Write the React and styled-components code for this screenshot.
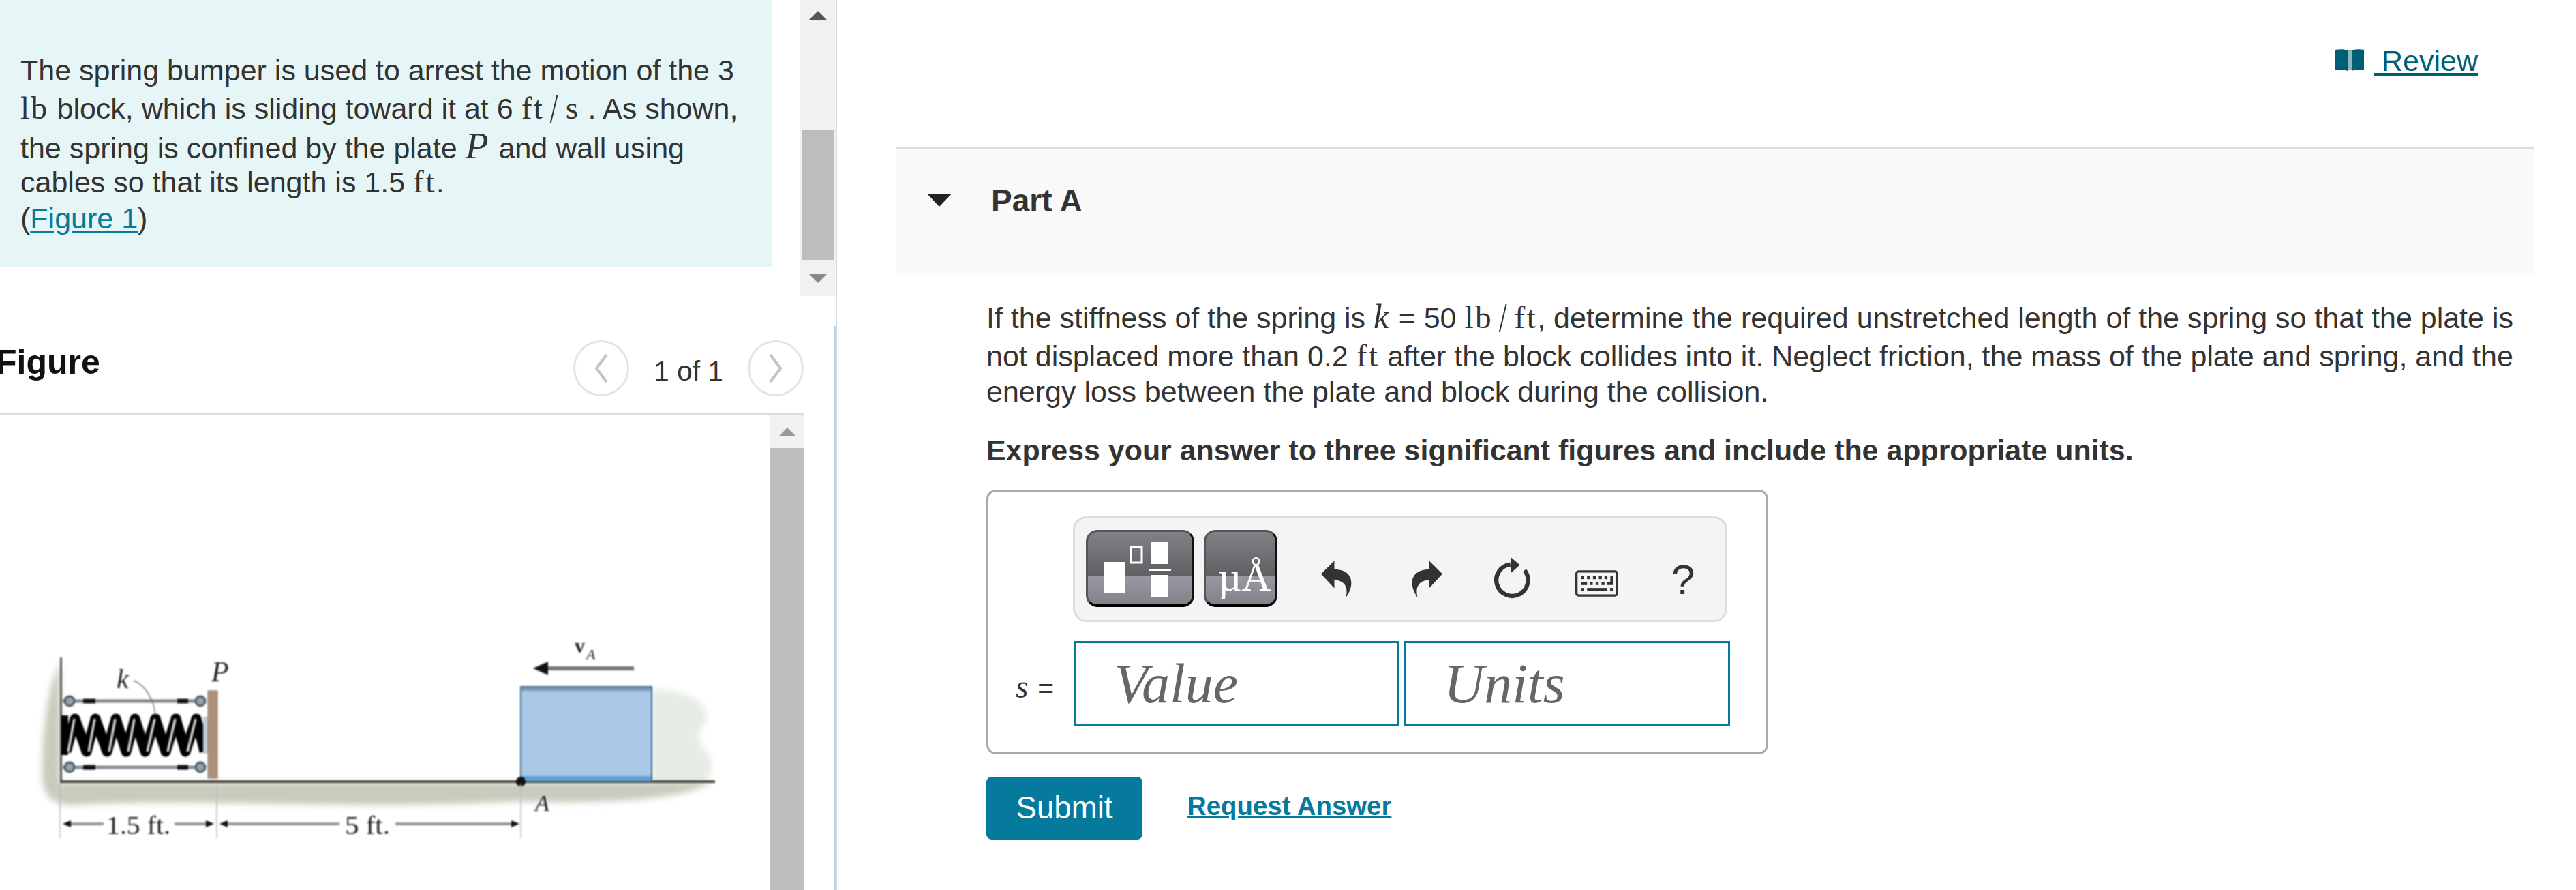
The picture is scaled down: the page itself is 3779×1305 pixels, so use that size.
import React from "react";
import styled, { createGlobalStyle } from "styled-components";

const GlobalStyle = createGlobalStyle`
  html, body {
    margin: 0;
    padding: 0;
    background: #fff;
  }

  body {
    font-family: "Liberation Sans", Arial, sans-serif;
    color: #333;
  }
`;

const Page = styled.div`
  width: 3779px;
  height: 1305px;
  display: flex;
  overflow: hidden;
`;

const LeftColumn = styled.div`
  width: 1228px;
  flex-shrink: 0;
  box-sizing: border-box;
  border-right: 2px solid #d3deea;
  display: flex;
  flex-direction: column;
`;

const TopPane = styled.div`
  height: 434px;
  display: flex;
  justify-content: space-between;
  align-items: flex-start;
  width: 1226px;
`;

const Intro = styled.div`
  width: 1132px;
  height: 392px;
  box-sizing: border-box;
  padding: 76px 0 0 30px;
  background: #e6f6f7;
  font-size: 43px;
`;

const Line = styled.div`
  height: ${p => p.$h}px;
  line-height: ${p => p.$h}px;
  white-space: nowrap;
`;

const Serif = styled.span`
  font-family: "Liberation Serif", "DejaVu Serif", serif;
  font-size: 1.1em;
  letter-spacing: 0.05em;
`;

const MathVar = styled(Serif)`
  font-style: italic;
  font-size: ${p => p.$size || 1.16}em;
`;

const Slash = styled.span`
  display: inline-block;
  font-family: "Liberation Serif", serif;
  font-weight: 400;
  transform: scale(0.9, 1.3);
  margin: 0 8px;
`;

const TextLink = styled.a`
  color: #057a9d;
  text-decoration: underline;
`;

const Scrollbar = styled.div`
  width: 52px;
  height: 434px;
  background: #f1f1f1;
  display: flex;
  flex-direction: column;
  align-items: center;
`;

const UpArrow = styled.div`
  width: 0;
  height: 0;
  flex-shrink: 0;
  margin-top: ${p => p.$top}px;
  border-left: ${p => p.$w}px solid transparent;
  border-right: ${p => p.$w}px solid transparent;
  border-bottom: 13px solid ${p => p.$color};
`;

const DownArrow = styled.div`
  width: 0;
  height: 0;
  margin-top: 21px;
  border-left: 13px solid transparent;
  border-right: 13px solid transparent;
  border-top: 13px solid #888;
`;

const Thumb = styled.div`
  width: 46px;
  height: 191px;
  margin-top: 161px;
  background: #bdbdbd;
`;

const FigurePane = styled.div`
  margin-top: 44px;
  flex: 1;
  min-height: 0;
  width: 1226px;
  box-sizing: border-box;
  padding-right: 44px;
  border-right: 3px solid #bcd0e6;
  margin-right: -2px;
  display: flex;
  flex-direction: column;
`;

const FigureHeader = styled.div`
  height: 130px;
  flex-shrink: 0;
  box-sizing: border-box;
  padding-top: 21px;
  border-bottom: 3px solid #ddd;
  display: flex;
  justify-content: space-between;
  align-items: flex-start;
`;

const FigureTitle = styled.h2`
  margin: 5px 0 0 -6px;
  font-size: 50px;
  line-height: 54px;
  font-weight: 700;
  color: #111;
`;

const Pager = styled.div`
  display: flex;
  align-items: flex-start;
  gap: 36px;
`;

const PagerButton = styled.div`
  width: 82px;
  height: 82px;
  box-sizing: border-box;
  border: 3px solid #e4e4e4;
  border-radius: 50%;
  display: flex;
  align-items: center;
  justify-content: center;
`;

const PagerText = styled.span`
  font-size: 40.8px;
  line-height: 54px;
  margin-top: 18px;
`;

const FigureBody = styled.div`
  flex: 1;
  min-height: 0;
  display: flex;
`;

const FigureCanvas = styled.div`
  width: 1130px;
  flex-shrink: 0;
  overflow: hidden;
`;

const Diagram = styled.svg`
  display: block;
  width: 1130px;
  height: 694px;
  filter: blur(0.9px);
`;

const FigureScroll = styled.div`
  width: 49px;
  background: #f1f1f1;
  display: flex;
  flex-direction: column;
  align-items: center;
`;

const FigureThumb = styled.div`
  flex: 1;
  width: 100%;
  margin-top: 17px;
  background: #bdbdbd;
`;

const RightColumn = styled.div`
  flex: 1;
  min-width: 0;
  box-sizing: border-box;
  padding: 0 62px 0 86px;
`;

const ReviewRow = styled.div`
  height: 215px;
  box-sizing: border-box;
  padding: 64px 82px 0 0;
  display: flex;
  justify-content: flex-end;
  align-items: flex-start;
  gap: 14px;
`;

const BookIcon = styled.svg`
  width: 42px;
  height: 33px;
  margin-top: 8px;
  filter: blur(0.5px);
`;

const ReviewLink = styled.a`
  color: #005e74;
  font-size: 43px;
  line-height: 50px;
  text-decoration: underline;
  white-space: pre;
`;

const PartHeader = styled.div`
  height: 188px;
  box-sizing: border-box;
  border-top: 3px solid #ddd;
  background: #f9f9f9;
  display: flex;
  align-items: center;
  padding: 0 0 34px 46px;
`;

const PartCaret = styled.div`
  width: 0;
  height: 0;
  border-left: 18px solid transparent;
  border-right: 18px solid transparent;
  border-top: 19px solid #222;
`;

const PartTitle = styled.h3`
  margin: 0 0 0 58px;
  font-size: 46px;
  font-weight: 700;
  color: #333;
`;

const PartBody = styled.div`
  padding: 33px 0 0 133px;
`;

const Problem = styled.div`
  font-size: 43px;
`;

const Instruction = styled.p`
  margin: 33px 0 0;
  font-size: 42.9px;
  line-height: 54px;
  font-weight: 700;
`;

const AnswerBox = styled.div`
  margin-top: 31px;
  width: 1147px;
  height: 388px;
  box-sizing: border-box;
  border: 3px solid #aaa;
  border-radius: 14px;
  padding: 36px 0 0 40px;
`;

const Toolbar = styled.div`
  margin-left: 84px;
  width: 960px;
  height: 155px;
  box-sizing: border-box;
  background: #f4f4f4;
  border: 3px solid #ddd;
  border-radius: 20px;
  padding: 17px 0 0 16px;
  display: flex;
  align-items: flex-start;
`;

const PaletteButton = styled.div`
  width: ${p => p.$w}px;
  height: 113px;
  margin-right: 14px;
  flex-shrink: 0;
  box-sizing: border-box;
  position: relative;
  border: 3px solid #555;
  border-bottom: 4px solid #000;
  border-right-color: #111;
  border-radius: 17px;
  background: linear-gradient(#818187 0%, #606063 60%, #9a99a3 60%, #838289 100%);
  overflow: hidden;
`;

const PaletteGlyph = styled.svg`
  display: block;
  width: 100%;
  height: 100%;
`;

const UnitsGlyph = styled.span`
  position: absolute;
  left: 18px;
  bottom: 10px;
  font-family: "Liberation Serif", serif;
  font-size: 60px;
  line-height: 60px;
  color: #fff;
  white-space: nowrap;
`;

const ToolIcon = styled.svg`
  flex-shrink: 0;
  margin-left: ${p => p.$left}px;
  margin-top: ${p => p.$top}px;
  width: ${p => p.$w}px;
  height: ${p => p.$h}px;
`;

const HelpMark = styled.span`
  margin-left: 78px;
  margin-top: 42px;
  font-size: 62px;
  line-height: 62px;
  color: #333;
`;

const InputRow = styled.div`
  margin-top: 28px;
  display: flex;
  align-items: center;
`;

const InputLabel = styled.div`
  width: 86px;
  flex-shrink: 0;
  margin-top: 8px;
  font-size: 41px;
  box-sizing: border-box;
`;

const AnswerInput = styled.input`
  width: ${p => p.$w}px;
  height: 125px;
  margin-right: 7px;
  box-sizing: border-box;
  border: 3px solid #057a9d;
  border-radius: 0;
  padding: 0 0 0 55px;
  background: #fff;
  font-family: "Liberation Serif", serif;
  font-style: italic;
  font-size: 82px;

  &::placeholder {
    color: #666;
    opacity: 1;
  }
`;

const Actions = styled.div`
  margin-top: 33px;
  display: flex;
  align-items: center;
  gap: 66px;
`;

const SubmitButton = styled.button`
  width: 229px;
  height: 92px;
  border: none;
  border-radius: 8px;
  background: #057a9d;
  color: #fff;
  font-family: "Liberation Sans", Arial, sans-serif;
  font-size: 45.6px;
`;

const RequestLink = styled(TextLink)`
  font-size: 38.4px;
  font-weight: 700;
  margin-bottom: 6px;
`;

const springTop = [110, 140, 170, 198, 228, 258, 288];
const springBottom = [97, 127, 157, 185, 213, 243, 272, 300];

const Rod = ({ y }) => (
  <g>
    <line x1="92" y1={y} x2="300" y2={y} stroke="#8a8a8a" strokeWidth="5" />
    <line x1="122" y1={y} x2="140" y2={y} stroke="#111" strokeWidth="7" />
    <line x1="260" y1={y} x2="276" y2={y} stroke="#111" strokeWidth="7" />
    <circle cx="102" cy={y} r="7" fill="#93a3ad" stroke="#4d5a62" strokeWidth="3" />
    <circle cx="294" cy={y} r="7" fill="#93a3ad" stroke="#4d5a62" strokeWidth="3" />
  </g>
);

const SpringBumper = () => {
  let zig = "";
  springBottom.forEach((x, i) => {
    zig += `${i ? "L" : "M"}${x} 1105 `;
    if (springTop[i]) zig += `L${springTop[i]} 1057 `;
  });
  return (
    <g>
      <rect x="90" y="1052" width="10" height="58" fill="#000" />
      <path d={zig} fill="none" stroke="#000" strokeWidth="15" strokeLinejoin="round" />
      {springTop.map((x, i) => (
        <line key={x} x1={springBottom[i] + 3} y1="1105" x2={x - 1} y2="1057" stroke="#d8d8d8" strokeWidth="3.5" />
      ))}
      <rect x="298" y="1054" width="7" height="54" fill="#c4ccd2" />
    </g>
  );
};

const BumperDiagram = () => (
  <Diagram viewBox="0 611 1130 694">
    <defs>
      <filter id="soft" x="-10%" y="-10%" width="120%" height="120%">
        <feGaussianBlur stdDeviation="5" />
      </filter>
    </defs>
    <g filter="url(#soft)">
      <path d="M88 975 C74 1000 62 1060 62 1130 C60 1165 72 1180 100 1184 C300 1172 500 1192 760 1178 C900 1182 1000 1176 1045 1150 L88 1150 Z" fill="#c9cbbd" />
      <path d="M956 1014 C1005 1014 1040 1030 1036 1060 C1022 1080 1022 1090 1040 1110 C1050 1130 1040 1150 1030 1150 L956 1150 Z" fill="#e6ece5" />
    </g>
    <rect x="88" y="967" width="3" height="182" fill="#555" />
    <rect x="88" y="1147" width="961" height="4" fill="#4a4a42" />
    <Rod y="1031" />
    <Rod y="1128" />
    <SpringBumper />
    <rect x="305" y="1016" width="14" height="128" fill="#b08f78" stroke="#777" strokeWidth="1" />
    <path d="M196 1001 C214 1008 226 1030 228 1052" fill="none" stroke="#777" strokeWidth="1.5" />
    <rect x="764" y="1010" width="192" height="138" fill="#a9c7e6" stroke="#3d6f9e" strokeWidth="2" />
    <rect x="765" y="1011" width="190" height="5" fill="#7d98b0" />
    <rect x="765" y="1141" width="190" height="7" fill="#5f9fd4" />
    <circle cx="764" cy="1149" r="7" fill="#111" />
    <line x1="796" y1="983" x2="930" y2="983" stroke="#777" strokeWidth="6" />
    <polygon points="782,983 804,973 804,993" fill="#111" />
    <g stroke="#bbb" strokeWidth="1.5">
      <line x1="88" y1="1152" x2="88" y2="1232" />
      <line x1="318" y1="1152" x2="318" y2="1232" />
      <line x1="764" y1="1152" x2="764" y2="1232" />
    </g>
    <g stroke="#999" strokeWidth="4">
      <line x1="96" y1="1211" x2="152" y2="1211" />
      <line x1="256" y1="1211" x2="305" y2="1211" />
      <line x1="330" y1="1211" x2="498" y2="1211" />
      <line x1="580" y1="1211" x2="754" y2="1211" />
    </g>
    <g fill="#111">
      <polygon points="92,1211 104,1206 104,1216" />
      <polygon points="314,1211 302,1206 302,1216" />
      <polygon points="322,1211 334,1206 334,1216" />
      <polygon points="762,1211 750,1206 750,1216" />
    </g>
    <g fontFamily="Liberation Serif, serif" fill="#222">
      <text x="156" y="1226" fontSize="38" textLength="94" lengthAdjust="spacingAndGlyphs">1.5 ft.</text>
      <text x="506" y="1226" fontSize="38" textLength="66" lengthAdjust="spacingAndGlyphs">5 ft.</text>
      <g fontStyle="italic">
        <text x="171" y="1012" fontSize="40">k</text>
        <text x="310" y="1002" fontSize="42">P</text>
        <text x="785" y="1192" fontSize="34">A</text>
        <text x="860" y="970" fontSize="22">A</text>
      </g>
      <text x="843" y="960" fontSize="30" fontWeight="700">v</text>
    </g>
  </Diagram>
);

const App = () => (
  <Page>
    <GlobalStyle />
    <LeftColumn>
      <TopPane>
        <Intro>
          <Line $h={54}>The spring bumper is used to arrest the motion of the 3</Line>
          <Line $h={56}>
            <Serif>lb</Serif> block, which is sliding toward it at 6 <Serif>ft<Slash>/</Slash>s</Serif> . As shown,
          </Line>
          <Line $h={54}>
            the spring is confined by the plate <MathVar $size={1.3}>P</MathVar> and wall using
          </Line>
          <Line $h={53}>
            cables so that its length is 1.5 <Serif>ft</Serif>.
          </Line>
          <Line $h={54}>
            (<TextLink>Figure 1</TextLink>)
          </Line>
        </Intro>
        <Scrollbar>
          <UpArrow $top={16} $w={13} $color="#555" />
          <Thumb />
          <DownArrow />
        </Scrollbar>
      </TopPane>
      <FigurePane>
        <FigureHeader>
          <FigureTitle>Figure</FigureTitle>
          <Pager>
            <PagerButton>
              <svg width="22" height="46" viewBox="0 0 22 46">
                <polyline points="19,3 4,23 19,43" fill="none" stroke="#c4c4c4" strokeWidth="4" />
              </svg>
            </PagerButton>
            <PagerText>1 of 1</PagerText>
            <PagerButton>
              <svg width="22" height="46" viewBox="0 0 22 46">
                <polyline points="3,3 18,23 3,43" fill="none" stroke="#c4c4c4" strokeWidth="4" />
              </svg>
            </PagerButton>
          </Pager>
        </FigureHeader>
        <FigureBody>
          <FigureCanvas>
            <BumperDiagram />
          </FigureCanvas>
          <FigureScroll>
            <UpArrow $top={19} $w={13} $color="#999" />
            <FigureThumb />
          </FigureScroll>
        </FigureBody>
      </FigurePane>
    </LeftColumn>

    <RightColumn>
      <ReviewRow>
        <BookIcon viewBox="0 0 42 33">
          <rect x="17" y="2" width="8" height="29" fill="#8fb7c2" />
          <path d="M0 1 C6 0 14 0 18 2 V32 C14 30 6 30 0 31 Z" fill="#005e74" />
          <path d="M42 1 C36 0 28 0 24 2 V32 C28 30 36 30 42 31 Z" fill="#005e74" />
        </BookIcon>
        <ReviewLink>{" Review"}</ReviewLink>
      </ReviewRow>
      <PartHeader>
        <PartCaret />
        <PartTitle>Part A</PartTitle>
      </PartHeader>
      <PartBody>
        <Problem>
          <Line $h={58}>
            If the stiffness of the spring is <MathVar>k</MathVar> = 50 <Serif>lb<Slash>/</Slash>ft</Serif>, determine the required unstretched length of the spring so that the plate is
          </Line>
          <Line $h={54}>
            not displaced more than 0.2 <Serif>ft</Serif> after the block collides into it. Neglect friction, the mass of the plate and spring, and the
          </Line>
          <Line $h={52}>energy loss between the plate and block during the collision.</Line>
        </Problem>
        <Instruction>Express your answer to three significant figures and include the appropriate units.</Instruction>
        <AnswerBox>
          <Toolbar>
            <PaletteButton $w={159}>
              <PaletteGlyph viewBox="0 0 153 106">
                <rect x="23" y="44" width="32" height="46" fill="#fff" />
                <rect x="63" y="22" width="16" height="23" fill="none" stroke="#fff" strokeWidth="3" />
                <rect x="92" y="15" width="26" height="32" fill="#fff" />
                <rect x="89" y="54" width="33" height="3" fill="#fff" />
                <rect x="92" y="63" width="26" height="33" fill="#fff" />
              </PaletteGlyph>
            </PaletteButton>
            <PaletteButton $w={108}>
              <UnitsGlyph>µÅ</UnitsGlyph>
            </PaletteButton>
            <ToolIcon $left={50} $top={45} $w={45} $h={54} viewBox="56 100 134 160">
              <path d="M56 158 L114 100 V138 C160 138 190 160 188 200 C187 225 175 245 165 260 C172 225 170 190 114 182 V220 Z" fill="#333" />
            </ToolIcon>
            <ToolIcon $left={88} $top={45} $w={45} $h={54} viewBox="454 100 134 160">
              <path d="M588 158 L530 100 V138 C484 138 454 160 456 200 C457 225 469 245 479 260 C472 225 474 190 530 182 V220 Z" fill="#333" />
            </ToolIcon>
            <ToolIcon $left={74} $top={40} $w={54} $h={61} viewBox="808 90 162 184">
              <path d="M948 148 A70 70 0 1 1 885 122" fill="none" stroke="#333" strokeWidth="19" />
              <polygon points="887,90 927,125 887,160" fill="#333" />
            </ToolIcon>
            <ToolIcon $left={67} $top={59} $w={63} $h={39} viewBox="60 118 190 116">
              <rect x="65" y="123" width="180" height="106" rx="9" fill="#f4f4f4" stroke="#333" strokeWidth="10" />
              <g fill="#333">
                <rect x="86" y="144" width="13" height="13" />
                <rect x="112" y="144" width="13" height="13" />
                <rect x="138" y="144" width="13" height="13" />
                <rect x="164" y="144" width="13" height="13" />
                <rect x="189" y="144" width="13" height="13" />
                <path d="M215 144 H227 V183 H201 V170 H215 Z" />
                <rect x="86" y="170" width="26" height="13" />
                <rect x="124" y="170" width="13" height="13" />
                <rect x="150" y="170" width="13" height="13" />
                <rect x="176" y="170" width="13" height="13" />
                <rect x="86" y="196" width="13" height="13" />
                <rect x="112" y="196" width="89" height="13" />
                <rect x="214" y="196" width="13" height="13" />
              </g>
            </ToolIcon>
            <HelpMark>?</HelpMark>
          </Toolbar>
          <InputRow>
            <InputLabel>
              <MathVar>s</MathVar> =
            </InputLabel>
            <AnswerInput $w={477} placeholder="Value" />
            <AnswerInput $w={478} placeholder="Units" />
          </InputRow>
        </AnswerBox>
        <Actions>
          <SubmitButton>Submit</SubmitButton>
          <RequestLink>Request Answer</RequestLink>
        </Actions>
      </PartBody>
    </RightColumn>
  </Page>
);

export default App;
